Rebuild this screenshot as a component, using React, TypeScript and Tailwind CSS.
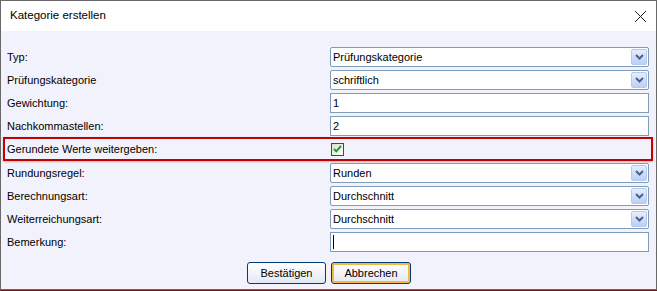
import React from "react";

const font = { fontFamily: '"Liberation Sans", Arial, sans-serif' };

const Chevron = () => (
  <svg width="9" height="6" viewBox="0 0 9 6" className="block">
    <path d="M1 1 L4.5 4.5 L8 1" fill="none" stroke="#4d6185" strokeWidth="2" />
  </svg>
);

const Select = ({ value }: { value: string }) => (
  <div className="flex h-5 items-center rounded-[2px] border border-[#7f9db9] bg-white pl-[2px] pr-[1px]">
    <span className="flex-1 text-[11px] text-black">{value}</span>
    <span className="flex h-4 w-4 items-center justify-center rounded-[2px] border border-[#b6c8ef] bg-gradient-to-b from-[#e6eefe] to-[#bccff7]">
      <Chevron />
    </span>
  </div>
);

const Input = ({ value, caret }: { value?: string; caret?: boolean }) => (
  <div className="flex h-5 items-center border border-[#7f9db9] bg-white pl-[2px]">
    {caret ? <span className="h-[14px] w-px bg-black" /> : <span className="text-[11px] text-black">{value}</span>}
  </div>
);

const Checkbox = () => (
  <span className="flex h-[13px] w-[13px] items-center justify-center border border-[#1c5180] bg-gradient-to-br from-[#dcdcd7] to-white">
    <svg width="9" height="8" viewBox="0 0 9 8">
      <path d="M1 4 L3.3 6.3 L8 1" fill="none" stroke="#21a121" strokeWidth="2" />
    </svg>
  </span>
);

type Row = { label: string; control: React.ReactNode; highlight?: boolean };

const rows: Row[] = [
  { label: "Typ:", control: <Select value="Prüfungskategorie" /> },
  { label: "Prüfungskategorie", control: <Select value="schriftlich" /> },
  { label: "Gewichtung:", control: <Input value="1" /> },
  { label: "Nachkommastellen:", control: <Input value="2" /> },
  { label: "Gerundete Werte weitergeben:", control: <Checkbox />, highlight: true },
  { label: "Rundungsregel:", control: <Select value="Runden" /> },
  { label: "Berechnungsart:", control: <Select value="Durchschnitt" /> },
  { label: "Weiterreichungsart:", control: <Select value="Durchschnitt" /> },
  { label: "Bemerkung:", control: <Input caret /> },
];

export default function App() {
  return (
    <div className="h-[291px] w-[657px] bg-[#6e1b1b]" style={font}>
      <div className="flex h-[290px] w-[657px] flex-col border border-[#696969]">
        <div className="flex h-[30px] items-center justify-between bg-white pl-[9px] pr-[9px]">
          <span className="text-[11.5px] text-black">Kategorie erstellen</span>
          <svg width="13" height="13" viewBox="0 0 13 13">
            <path d="M1 1 L12 12 M12 1 L1 12" stroke="#222" strokeWidth="1" />
          </svg>
        </div>
        <div className="flex flex-1 flex-col bg-[#f2f2fc] pl-[2px] pr-[3px] pt-[16px]">
          <div className="flex flex-col gap-[3px]">
            {rows.map((r) =>
              r.highlight ? (
                <div
                  key={r.label}
                  className="-mb-px -mt-[2px] grid h-6 grid-cols-[323px_1fr] items-center border-2 border-[#c40000] px-[2px] shadow-[0_1px_2px_rgba(0,0,0,0.25)]"
                >
                  <span className="text-[11px] text-black">{r.label}</span>
                  <span className="pl-px">{r.control}</span>
                </div>
              ) : (
                <div key={r.label} className="grid h-5 grid-cols-[323px_1fr] items-center px-[4px]">
                  <span className="text-[11px] text-black">{r.label}</span>
                  {r.control}
                </div>
              )
            )}
          </div>
          <div className="mt-[10px] flex justify-center gap-[5px] pl-[2px]">
            <button className="h-[22px] w-[79px] rounded-[3px] border border-[#003c74] bg-gradient-to-b from-white to-[#e3e8f4] text-[11px] text-black">
              Bestätigen
            </button>
            <button className="h-[22px] w-[80px] rounded-[3px] border border-[#003c74] bg-gradient-to-b from-white to-[#e3e8f4] text-[11px] text-black shadow-[inset_0_0_0_2px_#f5b942]">
              Abbrechen
            </button>
          </div>
        </div>
      </div>
    </div>
  );
}
